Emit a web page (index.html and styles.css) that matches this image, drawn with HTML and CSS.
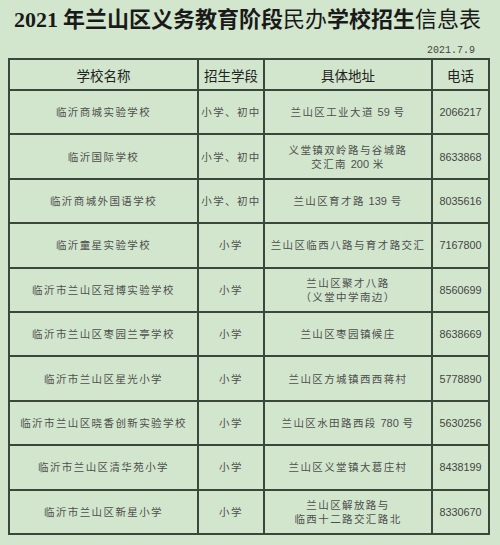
FILE: index.html
```html
<!DOCTYPE html>
<html lang="zh-CN">
<head>
<meta charset="utf-8">
<title>2021年兰山区义务教育阶段民办学校招生信息表</title>
<link rel="stylesheet" href="styles.css">
</head>
<body>
<h1 class="title"><span class="num">2021</span> 年兰山区义务教育阶段<span class="thin">民办</span>学校招生<span class="thin">信息表</span></h1>
<div class="date">2021.7.9</div>
<table class="sheet">
  <colgroup>
    <col class="c-name">
    <col class="c-level">
    <col class="c-addr">
    <col class="c-tel">
  </colgroup>
  <thead>
    <tr class="head">
      <th>学校名称</th><th>招生学段</th><th>具体地址</th><th>电话</th>
    </tr>
  </thead>
  <tbody>
    <tr><td>临沂商城实验学校</td><td>小学、初中</td><td>兰山区工业大道 <span class="n">59</span> 号</td><td class="tel">2066217</td></tr>
    <tr><td>临沂国际学校</td><td>小学、初中</td><td>义堂镇双岭路与谷城路<br>交汇南 <span class="n">200</span> 米</td><td class="tel">8633868</td></tr>
    <tr><td>临沂商城外国语学校</td><td>小学、初中</td><td>兰山区育才路 <span class="n">139</span> 号</td><td class="tel">8035616</td></tr>
    <tr><td>临沂童星实验学校</td><td>小学</td><td>兰山区临西八路与育才路交汇</td><td class="tel">7167800</td></tr>
    <tr><td>临沂市兰山区冠博实验学校</td><td>小学</td><td>兰山区聚才八路<br>（义堂中学南边）</td><td class="tel">8560699</td></tr>
    <tr><td>临沂市兰山区枣园兰亭学校</td><td>小学</td><td>兰山区枣园镇候庄</td><td class="tel">8638669</td></tr>
    <tr><td>临沂市兰山区星光小学</td><td>小学</td><td>兰山区方城镇西西蒋村</td><td class="tel">5778890</td></tr>
    <tr><td>临沂市兰山区晓香创新实验学校</td><td>小学</td><td>兰山区水田路西段 <span class="n">780</span> 号</td><td class="tel">5630256</td></tr>
    <tr><td>临沂市兰山区清华苑小学</td><td>小学</td><td>兰山区义堂镇大葛庄村</td><td class="tel">8438199</td></tr>
    <tr><td>临沂市兰山区新星小学</td><td>小学</td><td>兰山区解放路与<br>临西十二路交汇路北</td><td class="tel">8330670</td></tr>
  </tbody>
</table>
</body>
</html>
```

FILE: styles.css
```css
html, body {
  margin: 0;
  padding: 0;
}
body {
  background: #d2e6cd;
  width: 500px;
  height: 545px;
  overflow: hidden;
  font-family: "Noto Sans CJK SC", "Liberation Sans", sans-serif;
}
.title {
  margin: 0;
  padding-top: 4px;
  padding-right: 5px;
  text-align: center;
  font-size: 22px;
  line-height: 26px;
  font-weight: 700;
  color: #1a1a1a;
  letter-spacing: 0;
}
.title .num {
  font-family: "Liberation Serif", serif;
  font-weight: 700;
}
.title .thin {
  font-weight: 400;
}
.date {
  margin-top: 12px;
  padding-right: 25px;
  text-align: right;
  font-family: "Liberation Mono", monospace;
  font-size: 10px;
  line-height: 12px;
  color: #444;
}
.sheet {
  margin: 1px 0 0 8px;
  width: 482px;
  table-layout: fixed;
  border-collapse: separate;
  border-spacing: 0;
  border-left: 2px solid #3a473b;
  border-top: 2px solid #3a473b;
}
.c-name { width: 189px; }
.c-level { width: 66px; }
.c-addr { width: 168px; }
.c-tel { width: 57px; }
.sheet th,
.sheet td {
  border-right: 2px solid #3a473b;
  border-bottom: 2px solid #3a473b;
  padding: 0;
  text-align: center;
  vertical-align: middle;
}
.sheet th {
  font-size: 13.5px;
  font-weight: 400;
  color: #222;
  line-height: 16px;
}
.head {
  height: 31px;
}
.sheet tbody tr {
  height: 44.4px;
}
.sheet td {
  font-size: 10.5px;
  letter-spacing: 1.4px;
  line-height: 14px;
  color: #4e4e4e;
}
.sheet td .n {
  font-family: "Liberation Sans", sans-serif;
  font-size: 11px;
  letter-spacing: 0;
}
.sheet td.tel {
  font-family: "Liberation Sans", sans-serif;
  font-size: 10.8px;
  letter-spacing: 0;
  color: #444;
}
```
